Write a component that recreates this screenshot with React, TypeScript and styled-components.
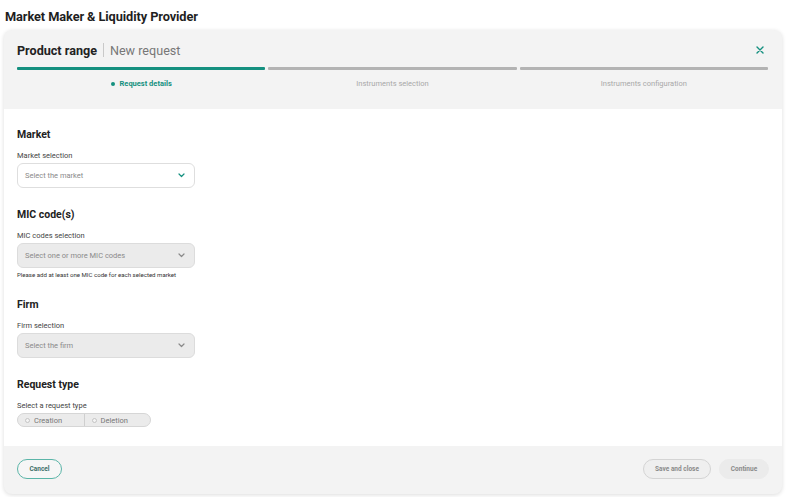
import React from "react";
import styled, { createGlobalStyle } from "styled-components";

const TEAL = "#14907f";

const Global = createGlobalStyle`
  html, body { margin: 0; padding: 0; background: #ffffff; }
  body { font-family: Roboto, "Noto Sans", sans-serif; color: #222; }
  * { box-sizing: border-box; }
`;

const Page = styled.div`
  width: 800px;
  height: 497px;
  padding: 9px 18px 3px 4px;
  display: flex;
  flex-direction: column;
`;

const PageTitle = styled.h1`
  margin: 0 0 0 1px;
  font-size: 12.8px;
  line-height: 16px;
  font-weight: 700;
  letter-spacing: -0.1px;
  color: #1f1f1f;
  height: 21px;
`;

const Card = styled.div`
  flex: 1;
  background: #f3f3f3;
  border-radius: 8px;
  box-shadow: 0 1px 4px rgba(0, 0, 0, 0.14);
  overflow: hidden;
  display: flex;
  flex-direction: column;
`;

const Header = styled.div`
  padding: 10px 14px 0 13px;
  height: 79px;
`;

const TitleRow = styled.div`
  height: 20px;
  display: flex;
  align-items: center;
`;

const Title = styled.span`
  font-size: 12.6px;
  font-weight: 700;
  color: #222;
`;

const Divider = styled.span`
  width: 1px;
  height: 14px;
  background: #c9c9c9;
  margin: 0 6px 0 6px;
`;

const Subtitle = styled.span`
  font-size: 12.6px;
  font-weight: 400;
  color: #777;
  flex: 1;
`;

const CloseBtn = styled.button`
  border: none;
  background: transparent;
  padding: 0;
  width: 12px;
  height: 12px;
  display: flex;
  align-items: center;
  justify-content: center;
  margin-right: 2px;
  cursor: pointer;
`;

const Steps = styled.div`
  margin-top: 7px;
  display: grid;
  grid-template-columns: repeat(3, 1fr);
  column-gap: 3px;
`;

const Step = styled.div`
  display: flex;
  flex-direction: column;
  align-items: center;
`;

const Bar = styled.div<{ $active?: boolean }>`
  width: 100%;
  height: 3px;
  border-radius: 1px;
  background: ${(p) => (p.$active ? TEAL : "#b3b3b3")};
`;

const StepLabel = styled.div<{ $active?: boolean }>`
  margin-top: 9px;
  font-size: 7.5px;
  line-height: 10px;
  font-weight: ${(p) => (p.$active ? 700 : 400)};
  color: ${(p) => (p.$active ? TEAL : "#a8a8a8")};
  display: flex;
  align-items: center;
  gap: 5px;
`;

const Dot = styled.span`
  width: 4px;
  height: 4px;
  border-radius: 50%;
  background: ${TEAL};
`;

const Body = styled.div`
  background: #ffffff;
  padding: 19px 13px 19px 13px;
  display: flex;
  flex-direction: column;
  gap: 20px;
`;

const Section = styled.div`
  display: flex;
  flex-direction: column;
`;

const SectionTitle = styled.h2`
  margin: 0 0 9px 0;
  font-size: 10.5px;
  line-height: 14px;
  font-weight: 700;
  color: #222;
`;

const FieldLabel = styled.div`
  font-size: 7.5px;
  line-height: 10px;
  color: #444;
  margin-bottom: 2px;
`;

const SelectBox = styled.div<{ $disabled?: boolean }>`
  width: 178px;
  height: 25px;
  border-radius: 6px;
  border: 1px solid ${(p) => (p.$disabled ? "#dcdcdc" : "#dedede")};
  background: ${(p) => (p.$disabled ? "#ebebeb" : "#ffffff")};
  display: flex;
  align-items: center;
  padding: 0 9px 0 7px;
  font-size: 7.5px;
  color: #8a8a8a;
`;

const SelectText = styled.span`
  flex: 1;
`;

const Help = styled.div`
  margin-top: 3px;
  font-size: 6.1px;
  line-height: 7px;
  color: #333;
`;

const Toggle = styled.div`
  width: 134px;
  height: 14px;
  border-radius: 7px;
  border: 1px solid #d6d6d6;
  background: #ebebeb;
  display: flex;
`;

const ToggleOption = styled.div<{ $first?: boolean }>`
  flex: 1;
  display: flex;
  align-items: center;
  gap: 4px;
  padding-left: 7px;
  font-size: 7.5px;
  color: #777;
  border-left: ${(p) => (p.$first ? "none" : "1px solid #cfcfcf")};
`;

const Radio = styled.span`
  width: 5px;
  height: 5px;
  border-radius: 50%;
  border: 1px solid #c4c4c4;
  background: #f4f4f4;
`;

const Footer = styled.div`
  flex: 1;
  display: flex;
  align-items: center;
  padding: 0 13px 2px 13px;
  gap: 8px;
`;

const Spacer = styled.div`
  flex: 1;
`;

const Button = styled.button<{ $variant: "outline" | "ghost" | "muted"; $w: number }>`
  height: 20px;
  width: ${(p) => p.$w}px;
  border-radius: 10px;
  font-family: inherit;
  font-size: 6.5px;
  font-weight: 700;
  padding: 0;
  cursor: pointer;
  border: 1px solid
    ${(p) =>
      p.$variant === "outline" ? "#5bb5a8" : p.$variant === "ghost" ? "#d4d4d4" : "#ebebeb"};
  background: ${(p) => (p.$variant === "muted" ? "#ebebeb" : p.$variant === "ghost" ? "#efefef" : "#f6f6f6")};
  color: ${(p) => (p.$variant === "outline" ? "#3d6f69" : "#8a8a8a")};
`;

const Chevron = ({ color }: { color: string }) => (
  <svg width="7" height="5" viewBox="0 0 7 5" fill="none">
    <path d="M1 1l2.5 2.5L6 1" stroke={color} strokeWidth="1.2" strokeLinecap="round" strokeLinejoin="round" />
  </svg>
);

const steps = [
  { label: "Request details", active: true },
  { label: "Instruments selection", active: false },
  { label: "Instruments configuration", active: false },
];

export default function App() {
  return (
    <>
      <Global />
      <Page>
        <PageTitle>Market Maker &amp; Liquidity Provider</PageTitle>
        <Card>
          <Header>
            <TitleRow>
              <Title>Product range</Title>
              <Divider />
              <Subtitle>New request</Subtitle>
              <CloseBtn aria-label="close">
                <svg width="8" height="8" viewBox="0 0 8 8">
                  <path d="M1 1l6 6M7 1L1 7" stroke={TEAL} strokeWidth="1.4" strokeLinecap="round" />
                </svg>
              </CloseBtn>
            </TitleRow>
            <Steps>
              {steps.map((s) => (
                <Step key={s.label}>
                  <Bar $active={s.active} />
                  <StepLabel $active={s.active}>
                    {s.active && <Dot />}
                    {s.label}
                  </StepLabel>
                </Step>
              ))}
            </Steps>
          </Header>
          <Body>
            <Section>
              <SectionTitle>Market</SectionTitle>
              <FieldLabel>Market selection</FieldLabel>
              <SelectBox>
                <SelectText>Select the market</SelectText>
                <Chevron color={TEAL} />
              </SelectBox>
            </Section>
            <Section>
              <SectionTitle>MIC code(s)</SectionTitle>
              <FieldLabel>MIC codes selection</FieldLabel>
              <SelectBox $disabled>
                <SelectText>Select one or more MIC codes</SelectText>
                <Chevron color="#8a8a8a" />
              </SelectBox>
              <Help>Please add at least one MIC code for each selected market</Help>
            </Section>
            <Section>
              <SectionTitle>Firm</SectionTitle>
              <FieldLabel>Firm selection</FieldLabel>
              <SelectBox $disabled>
                <SelectText>Select the firm</SelectText>
                <Chevron color="#8a8a8a" />
              </SelectBox>
            </Section>
            <Section>
              <SectionTitle>Request type</SectionTitle>
              <FieldLabel>Select a request type</FieldLabel>
              <Toggle>
                <ToggleOption $first>
                  <Radio />
                  Creation
                </ToggleOption>
                <ToggleOption>
                  <Radio />
                  Deletion
                </ToggleOption>
              </Toggle>
            </Section>
          </Body>
          <Footer>
            <Button $variant="outline" $w={45}>Cancel</Button>
            <Spacer />
            <Button $variant="ghost" $w={68}>Save and close</Button>
            <Button $variant="muted" $w={50}>Continue</Button>
          </Footer>
        </Card>
      </Page>
    </>
  );
}
